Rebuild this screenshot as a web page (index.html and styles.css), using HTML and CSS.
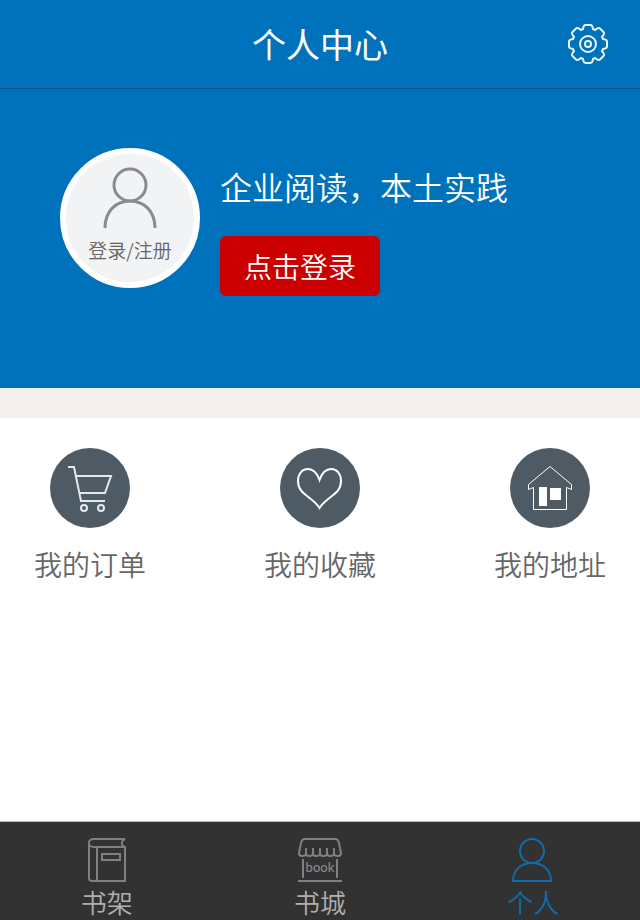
FILE: index.html
```html
<!DOCTYPE html>
<html lang="zh-CN">

<head>
    <meta charset="UTF-8">
    <meta name="viewport" content="width=device-width, initial-scale=1.0">
    <title>个人中心</title>
    <link rel="stylesheet" href="styles.css">
</head>

<body>
    <header class="topbar">
        <h1>个人中心</h1>
        <button type="button" class="settings" aria-label="设置">
            <svg width="40" height="40" viewBox="0 0 40 40">
                <path d="M15 5Q15.500 1 17.500 1H22.500Q24.500 1 25 5L27 6Q30.500 3 32 4.500L35.500 8Q37 9.500 34 13L35 15Q39 15.500 39 17.500V22.500Q39 24.500 35 25L34 27Q37 30.500 35.500 32L32 35.500Q30.500 37 27 34L25 35Q24.500 39 22.500 39H17.500Q15.500 39 15 35L13 34Q9.500 37 8 35.500L4.500 32Q3 30.500 6 27L5 25Q1 24.500 1 22.500V17.500Q1 15.500 5 15L6 13Q3 9.500 4.500 8L8 4.500Q9.500 3 13 6Z"/>
                <circle cx="20" cy="20" r="8"/>
                <circle cx="20" cy="20" r="3"/>
            </svg>
        </button>
    </header>

    <section class="profile">
        <a href="#" class="avatar">
            <svg width="56" height="62" viewBox="0 0 56 62">
                <circle cx="28" cy="17" r="16"/>
                <path d="M3 60C3 43 14 33 28 33S53 43 53 60"/>
            </svg>
            <span>登录/注册</span>
        </a>
        <div class="intro">
            <p>企业阅读，本土实践</p>
            <button type="button" class="login">点击登录</button>
        </div>
    </section>

    <main>
        <nav class="menu">
            <a href="#">
                <svg width="80" height="80" viewBox="0 0 80 80">
                    <circle class="disc" cx="40" cy="40" r="40"/>
                    <g class="cart">
                        <path d="M18 19H24L31 53H55M26 28H61L55 45H30"/>
                        <circle cx="34" cy="60" r="3"/>
                        <circle cx="51" cy="60" r="3"/>
                    </g>
                </svg>
                <span>我的订单</span>
            </a>
            <a href="#">
                <svg width="80" height="80" viewBox="0 0 80 80">
                    <circle class="disc" cx="40" cy="40" r="40"/>
                    <path class="heart" d="M39.500 32C37 25 33 21 28 21C22 21 18 26 18 33C18 47 32 48 39.500 60C47 48 61 47 61 33C61 26 57 21 51 21C46 21 42 25 39.500 32Z"/>
                </svg>
                <span>我的收藏</span>
            </a>
            <a href="#">
                <svg width="80" height="80" viewBox="0 0 80 80">
                    <circle class="disc" cx="40" cy="40" r="40"/>
                    <path class="house" d="M23.500 39.500L18.500 41.500V36.500L40 18.500L61.500 36.500V41.500L56.500 39.500V61.500H23.500Z"/>
                    <path class="panes" d="M29 39H37V58H29ZM40 40H51V52H40Z"/>
                </svg>
                <span>我的地址</span>
            </a>
        </nav>
    </main>

    <nav class="tabbar">
        <a href="#">
            <svg width="44" height="46" viewBox="0 0 44 46">
                <path d="M40 2H9C2 2 2 10 9 10H40V44H7Q4 44 4 41V6M12 10V44M40 2Q34 5 39 10"/>
                <path d="M17 17H35V23H17Z"/>
            </svg>
            <span>书架</span>
        </a>
        <a href="#">
            <svg width="44" height="46" viewBox="0 0 44 46">
                <path d="M1 16L3 6Q4 2 7 2H37Q40 2 41 6L43 16Q43 19 40 19Q36 19 36 16V11M36 16Q36 19 32 19Q29 19 29 16V11M29 16Q29 19 25 19Q22 19 22 16V11M22 16Q22 19 18 19Q15 19 15 16V11M15 16Q15 19 11 19Q8 19 8 16V11M8 16Q8 19 4 19Q1 19 1 16M5 22V41M39 22V41"/>
                <path d="M0 44H44"/>
                <text x="22" y="35">book</text>
            </svg>
            <span>书城</span>
        </a>
        <a href="#" class="active">
            <svg width="44" height="46" viewBox="0 0 44 46">
                <circle cx="21" cy="14" r="12"/>
                <path d="M2 44C2 33 10 26 21 26S40 33 40 44Z"/>
            </svg>
            <span>个人</span>
        </a>
    </nav>
</body>

</html>
```
FILE: styles.css
```css
* {
    box-sizing: border-box;
}

body {
    margin: 0;
    min-height: 100vh;
    display: flex;
    flex-direction: column;
    font-family: "Noto Sans CJK SC", sans-serif;
    font-weight: 350;
    background-color: #fff;
}

a {
    text-decoration: none;
    color: inherit;
}

button {
    border: none;
    font-family: inherit;
    font-weight: inherit;
    color: #fff;
    cursor: pointer;
}

svg {
    display: block;
    fill: none;
}

.topbar {
    display: grid;
    grid-template-columns: 40px 1fr 40px;
    align-items: center;
    height: 89px;
    padding: 0 32px;
    background-color: #0072bc;
    border-bottom: 1px solid #00528a;
}

.topbar h1 {
    grid-column: 2;
    margin: 0;
    font-size: 34px;
    font-weight: 400;
    line-height: 48px;
    text-align: center;
    color: #fff;
}

.settings {
    padding: 0;
    background: none;
}

.settings svg {
    stroke: #e8f4fc;
    stroke-width: 2;
}

.profile {
    display: flex;
    gap: 20px;
    height: 299px;
    padding: 59px 60px 0;
    background-color: #0072bc;
    color: #fff;
}

.avatar {
    display: flex;
    flex-direction: column;
    align-items: center;
    width: 140px;
    height: 140px;
    padding-top: 14px;
    border: 6px solid #fff;
    border-radius: 50%;
    background-color: #f2f3f5;
    font-size: 19px;
    line-height: 40px;
    color: #666;
}

.avatar svg {
    overflow: visible;
    stroke: #898b8e;
    stroke-width: 3;
}

.intro p {
    margin: 14px 0 26px;
    font-size: 32px;
    line-height: 48px;
}

.login {
    width: 160px;
    height: 60px;
    padding: 0;
    border-radius: 6px;
    background-color: #c00;
    font-size: 28px;
    line-height: 60px;
}

main {
    flex: 1;
    border-top: 30px solid #f3efec;
}

.menu {
    display: flex;
    justify-content: space-between;
    padding: 30px;
}

.menu a {
    display: flex;
    flex-direction: column;
    align-items: center;
    gap: 16px;
    width: 120px;
    font-size: 28px;
    line-height: 40px;
    color: #666;
}

.disc {
    fill: #4f5b64;
}

.cart {
    stroke: #e6e8ea;
    stroke-width: 2;
}

.heart {
    stroke: #fff;
    stroke-width: 2;
}

.house {
    stroke: #fff;
}

.panes {
    fill: #fff;
}

.tabbar {
    display: grid;
    grid-template-columns: repeat(3, 1fr);
    height: 99px;
    border-top: 1px solid #bbb;
    background-color: #323232;
}

.tabbar a {
    display: flex;
    flex-direction: column;
    align-items: center;
    padding-top: 15px;
    font-size: 26px;
    line-height: 38px;
    color: #b0b0b0;
}

.tabbar svg {
    flex: none;
    stroke: #808080;
    stroke-width: 2;
}

.tabbar text {
    font-family: Lato, sans-serif;
    font-size: 13px;
    font-weight: 500;
    text-anchor: middle;
    stroke: none;
    fill: #8a8a8a;
}

.tabbar .active {
    color: #0d6dab;
}

.tabbar .active svg {
    stroke: #0d6dab;
}
```
